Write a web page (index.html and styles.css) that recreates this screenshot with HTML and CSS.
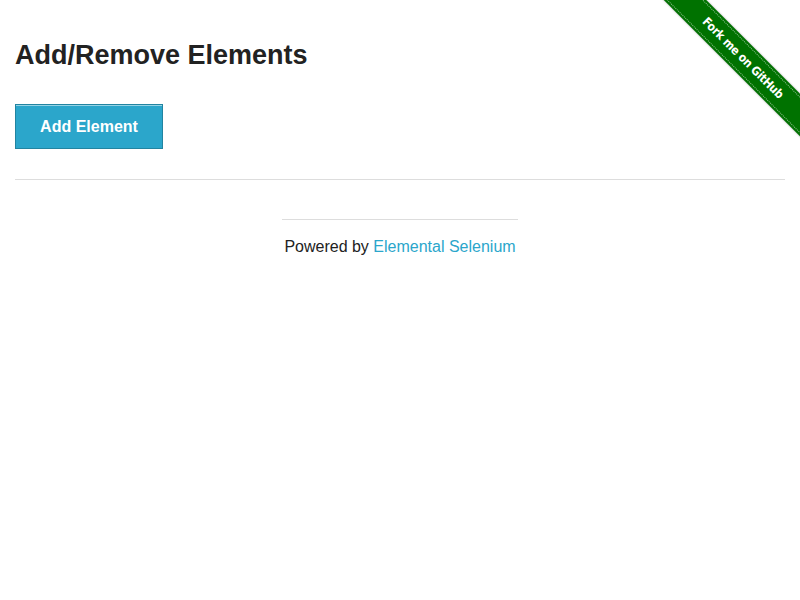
FILE: index.html
```html
<!DOCTYPE html>
<html>
<head>
<meta charset="utf-8">
<link rel="stylesheet" href="styles.css">
</head>
<body>
<div class="ribbon-wrap"><div class="ribbon"><span>Fork me on GitHub</span></div></div>
<div class="page">
  <div class="example">
    <h3>Add/Remove Elements</h3>
    <button class="add-btn">Add Element</button>
  </div>
  <hr class="sep">
  <div class="footer">
    <hr class="footer-line">
    <div class="powered">Powered by <a href="#">Elemental Selenium</a></div>
  </div>
</div>
</body>
</html>
```
FILE: styles.css
```css
html, body {
  margin: 0;
  padding: 0;
  background: #fff;
  font-family: "Liberation Sans", Arial, sans-serif;
  color: #222;
}
.page {
  padding: 0 15px;
}
.example h3 {
  margin: 0;
  padding-top: 38px;
  font-size: 27px;
  line-height: 34px;
  font-weight: bold;
  color: #222;
}
.add-btn {
  margin-top: 32px;
  display: block;
  font-family: "Liberation Sans", Arial, sans-serif;
  font-weight: bold;
  font-size: 16px;
  line-height: 19px;
  color: #fff;
  background: #2ba6cb;
  border: 1px solid #2284a1;
  box-shadow: inset 0 1px 0 rgba(255,255,255,0.5);
  padding: 12px 24px;
  width: 148px;
  cursor: pointer;
}
.sep {
  margin: 30px 0 0;
  border: 0;
  border-top: 1px solid #ddd;
  height: 0;
}
.footer {
  display: flex;
  flex-direction: column;
  align-items: center;
  padding-top: 39px;
}
.footer-line {
  width: 236px;
  margin: 0;
  border: 0;
  border-top: 1px solid #ddd;
  height: 0;
}
.powered {
  margin-top: 17px;
  font-size: 16px;
  line-height: 20px;
  color: #222;
}
.powered a {
  color: #2ba6cb;
  text-decoration: none;
}
.ribbon-wrap {
  position: absolute;
  top: 0;
  right: 0;
  width: 149px;
  height: 149px;
  overflow: hidden;
}
.ribbon {
  position: absolute;
  width: 220px;
  height: 30px;
  left: -18px;
  top: 43px;
  transform: rotate(45deg);
  background: #007200;
  box-sizing: border-box;
  display: flex;
  align-items: center;
  justify-content: center;
  box-shadow: 0 0 2px rgba(0,0,0,0.4);
}
.ribbon::before, .ribbon::after {
  content: "";
  position: absolute;
  left: 0;
  right: 0;
  height: 0;
  border-top: 1px dotted rgba(255,255,255,0.55);
}
.ribbon::before { top: 2px; }
.ribbon::after { bottom: 2px; }
.ribbon span {
  color: #fff;
  font-family: "DejaVu Sans Condensed", "DejaVu Sans", sans-serif;
  font-weight: bold;
  font-size: 12px;
  letter-spacing: -0.3px;
}
```
